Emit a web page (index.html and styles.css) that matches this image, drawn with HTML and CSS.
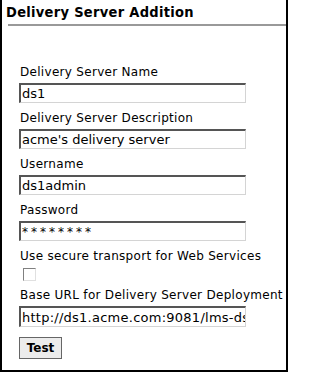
FILE: index.html
```html
<!DOCTYPE html>
<html>
<head>
<meta charset="utf-8">
<link rel="stylesheet" href="styles.css">
</head>
<body>
<div class="frame">
  <div class="header">
    <h1 class="title">Delivery Server Addition</h1>
  </div>
  <div class="rule"></div>
  <form class="form">
    <label class="label">Delivery Server Name</label>
    <input class="field" type="text" value="ds1" spellcheck="false">
    <label class="label">Delivery Server Description</label>
    <input class="field" type="text" value="acme's delivery server" spellcheck="false">
    <label class="label">Username</label>
    <input class="field" type="text" value="ds1admin" spellcheck="false">
    <label class="label">Password</label>
    <input class="field pw" type="text" value="********" spellcheck="false">
    <label class="label">Use secure transport for Web Services</label>
    <input class="check" type="checkbox">
    <label class="label">Base URL for Delivery Server Deployment</label>
    <input class="field url" type="text" value="http://ds1.acme.com:9081/lms-ds" spellcheck="false">
    <button class="btn" type="button">Test</button>
  </form>
</div>
</body>
</html>
```
FILE: styles.css
```css
html, body {
  margin: 0;
  padding: 0;
  background: #fff;
}
.frame {
  width: 288px;
  height: 372px;
  box-sizing: border-box;
  border-left: 2px solid #000;
  border-right: 2px solid #000;
  border-bottom: 2px solid #000;
  font-family: "DejaVu Sans", Verdana, sans-serif;
  color: #000;
  overflow: hidden;
}
.header {
  padding: 2px 0 0 4px;
  height: 24px;
  box-sizing: border-box;
}
.title {
  margin: 0;
  font-family: "DejaVu Sans Condensed", "DejaVu Sans", sans-serif;
  font-size: 14.5px;
  line-height: 20px;
  font-weight: bold;
  letter-spacing: 0.3px;
}
.rule {
  margin-left: 6px;
  height: 2px;
  background: #999;
}
.form {
  display: flex;
  flex-direction: column;
  align-items: flex-start;
  padding: 37px 0 0 17px;
}
.label {
  display: block;
  font-size: 12px;
  line-height: 18px;
  letter-spacing: 0.3px;
  padding-left: 1px;
  margin-bottom: 2px;
}
.field {
  box-sizing: border-box;
  width: 227px;
  height: 20px;
  margin: 0 0 6px 0;
  padding: 0 0 0 1px;
  border-top: 2px solid #555;
  border-left: 2px solid #555;
  border-right: 1px solid #d4d4d4;
  border-bottom: 1px solid #d4d4d4;
  font-family: "DejaVu Sans", Verdana, sans-serif;
  font-size: 13px;
  color: #000;
  background: #fff;
  outline: none;
}
.field.pw {
  letter-spacing: 3px;
  font-size: 12px;
}
.field.url {
  height: 21px;
  margin-bottom: 10px;
  letter-spacing: 0.25px;
}
.check {
  -webkit-appearance: none;
  appearance: none;
  box-sizing: border-box;
  width: 13px;
  height: 13px;
  margin: 1px 0 5px 4px;
  border-top: 1px solid #808080;
  border-left: 1px solid #808080;
  border-right: 1px solid #e0e0e0;
  border-bottom: 1px solid #e0e0e0;
  background: #fff;
}
.btn {
  box-sizing: border-box;
  width: 43px;
  height: 22px;
  margin: 0;
  padding: 0;
  border: 1px solid #666;
  background: #ececec;
  font-family: "DejaVu Sans", Verdana, sans-serif;
  font-size: 12px;
  font-weight: bold;
  color: #000;
}
```
